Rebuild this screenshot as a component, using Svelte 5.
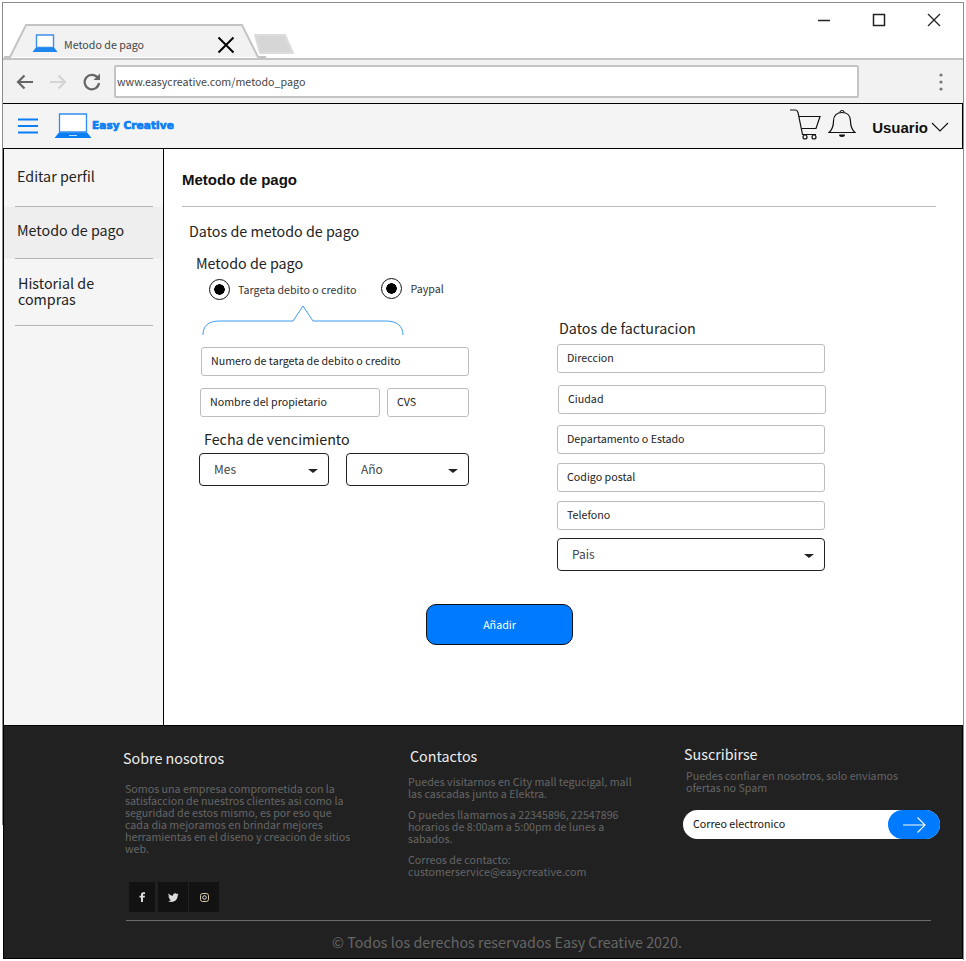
<script>
  let billing = ["Direccion", "Ciudad", "Departamento o Estado", "Codigo postal", "Telefono"];
</script>

<div class="window">
  <div class="tabstrip">
    <div class="tab">
      <svg class="tab-shape" width="262" height="36" viewBox="0 0 262 36">
        <path d="M0 34H6L22 2H238L254 34H262" fill="#f2f2f2" stroke="#c4c4c4" stroke-width="2" />
      </svg>
      <svg class="tab-logo" width="26" height="19" viewBox="0 0 26 19">
        <path d="M4.500 1H21.500V13.500H4.500Z" fill="#fff" stroke="#3b8fe8" stroke-width="1.400" />
        <path d="M3.500 14H22.500L25.500 18H0.500Z" fill="#1f86f0" />
      </svg>
      <span class="tab-title">Metodo de pago</span>
      <svg class="tab-close" width="18" height="18" viewBox="0 0 18 18">
        <path d="M1.500 1.500L16.500 16.500M16.500 1.500L1.500 16.500" stroke="#000" stroke-width="2" />
      </svg>
    </div>
    <svg class="new-tab" width="42" height="22" viewBox="0 0 42 22">
      <path d="M2 2H32L40 20H7Z" fill="#d6d6d6" stroke="#dcdcdc" stroke-width="2" stroke-linejoin="round" />
    </svg>
    <div class="win-controls">
      <svg width="14" height="14" viewBox="0 0 14 14"><path d="M1 7.500H13" stroke="#222" stroke-width="1.500" /></svg>
      <svg width="14" height="14" viewBox="0 0 14 14"><rect x="1.500" y="1.500" width="11" height="11" fill="none" stroke="#222" stroke-width="1.500" /></svg>
      <svg width="14" height="14" viewBox="0 0 14 14"><path d="M1 1L13 13M13 1L1 13" stroke="#222" stroke-width="1.300" /></svg>
    </div>
  </div>

  <div class="toolbar">
    <svg width="20" height="18" viewBox="0 0 20 18">
      <path d="M18 9H3M9.500 2.500L3 9L9.500 15.500" fill="none" stroke="#666" stroke-width="2.200" />
    </svg>
    <svg class="fwd" width="20" height="18" viewBox="0 0 20 18">
      <path d="M2 9H17M10.500 2.500L17 9L10.500 15.500" fill="none" stroke="#d4d4d4" stroke-width="2.200" />
    </svg>
    <svg class="reload" width="20" height="20" viewBox="0 0 20 20">
      <path d="M15.800 6A7.200 7.200 0 1 0 17 11" fill="none" stroke="#666" stroke-width="2.200" />
      <path d="M18 1.500V8H11.500Z" fill="#666" />
    </svg>
    <div class="address">www.easycreative.com/metodo_pago</div>
    <svg class="dots" width="6" height="18" viewBox="0 0 6 18">
      <circle cx="3" cy="2" r="1.600" fill="#777" /><circle cx="3" cy="9" r="1.600" fill="#777" /><circle cx="3" cy="16" r="1.600" fill="#777" />
    </svg>
  </div>

  <header class="appbar">
    <svg class="burger" width="20" height="16" viewBox="0 0 20 16">
      <path d="M0 1.500H20M0 8H20M0 14.500H20" stroke="#0a7ef5" stroke-width="2" />
    </svg>
    <svg class="logo" width="38" height="26" viewBox="0 0 38 26">
      <path d="M5.500 1H32.500V19H5.500Z" fill="#fff" stroke="#2f8cf0" stroke-width="1.300" />
      <path d="M5 19.500H33L37.500 25H0.500Z" fill="#0a7ef5" />
      <path d="M15 22H23V23H15Z" fill="#bcdcff" />
    </svg>
    <span class="brand">Easy Creative</span>
    <div class="appbar-right">
      <svg class="cart" width="32" height="32" viewBox="0 0 32 32">
        <path d="M1 2H6.500C8 2 8.600 3 9 4.500L13.500 26.500H27" fill="none" stroke="#111" stroke-width="1.200" />
        <path d="M9.800 8.500H31L27 20.500H12.300" fill="none" stroke="#111" stroke-width="1.200" />
        <circle cx="16" cy="29" r="2" fill="none" stroke="#111" stroke-width="1.200" />
        <circle cx="25" cy="29" r="2" fill="none" stroke="#111" stroke-width="1.200" />
      </svg>
      <svg class="bell" width="28" height="30" viewBox="0 0 28 30">
        <path d="M1 23.500C4 21 5.500 18 5.500 12C5.500 6.500 9 3.500 14 3.500C19 3.500 22.500 6.500 22.500 12C22.500 18 24 21 27 23.500Z" fill="none" stroke="#111" stroke-width="1.200" />
        <path d="M12 3.500A2 2 0 0 1 16 3.500" fill="none" stroke="#111" stroke-width="1.200" />
        <path d="M11 25.500H17A3 2.500 0 0 1 11 25.500Z" fill="#111" />
      </svg>
      <span class="user">Usuario</span>
      <svg class="chevron" width="18" height="10" viewBox="0 0 18 10"><path d="M1 1L9 9L17 1" fill="none" stroke="#111" stroke-width="1.100" /></svg>
    </div>
  </header>

  <div class="page">
    <aside class="sidebar">
      <div class="side-item first">Editar perfil</div>
      <div class="side-item active">Metodo de pago</div>
      <div class="side-item last">Historial de<br />compras</div>
    </aside>

    <main class="content">
      <h1>Metodo de pago</h1>
      <hr />
      <h2>Datos de metodo de pago</h2>
      <div class="columns">
        <section class="col-left">
          <h3>Metodo de pago</h3>
          <div class="radios">
            <label class="radio"><span class="dot"></span>Targeta debito o credito</label>
            <label class="radio second"><span class="dot"></span>Paypal</label>
          </div>
          <svg class="bracket" width="202" height="32" viewBox="0 0 202 32">
            <path d="M1 31C1 22 6 17 18 17H91L101 2L111 17H184C195 17 201 22 201 31" fill="none" stroke="#3f9bf5" stroke-width="1" />
          </svg>
          <div class="field wide">Numero de targeta de debito o credito</div>
          <div class="field-row">
            <div class="field owner">Nombre del propietario</div>
            <div class="field cvs">CVS</div>
          </div>
          <h3 class="exp">Fecha de vencimiento</h3>
          <div class="select-row">
            <div class="select month">Mes<span class="caret"></span></div>
            <div class="select year">Año<span class="caret"></span></div>
          </div>
        </section>

        <section class="col-right">
          <h3>Datos de facturacion</h3>
          <div class="billing">
            {#each billing as item, i}
              <div class="field b{i}">{item}</div>
            {/each}
          </div>
          <div class="select country">Pais<span class="caret"></span></div>
        </section>
      </div>
      <div class="actions"><button>Añadir</button></div>
    </main>
  </div>

  <footer>
    <div class="foot-cols">
      <div class="foot-about">
        <h4>Sobre nosotros</h4>
        <p>Somos una empresa comprometida con la<br />satisfaccion de nuestros clientes asi como la<br />seguridad de estos mismo, es por eso que<br />cada dia mejoramos en brindar mejores<br />herramientas en el diseno y creacion de sitios<br />web.</p>
        <div class="social">
          <span class="soc s1">
            <svg width="7" height="10" viewBox="0 0 7 10"><path d="M2 10V5.500H0.500V3.800H2V2.600C2 1 3 0.300 4.300 0.300H6V2H4.900C4.300 2 4 2.300 4 2.800V3.800H6L5.700 5.500H4V10Z" fill="#ddd" /></svg>
          </span>
          <span class="soc s2">
            <svg width="11" height="9" viewBox="0 0 11 9"><path d="M10.500 1.200C10.100 1.400 9.700 1.500 9.300 1.500C9.700 1.300 10.100 0.900 10.200 0.400C9.800 0.600 9.300 0.800 8.800 0.900C8 0 6.600 -0.100 5.700 0.700C5.100 1.300 4.900 2 5.100 2.800C3.400 2.700 1.800 1.900 0.700 0.500C0.100 1.500 0.400 2.800 1.400 3.500C1 3.500 0.700 3.400 0.400 3.200C0.400 4.300 1.100 5.200 2.200 5.400C1.900 5.500 1.500 5.500 1.200 5.400C1.500 6.300 2.300 6.900 3.300 7C2.300 7.800 1.100 8.100 0 8C1.100 8.700 2.300 9 3.500 9C7.500 9 9.800 5.600 9.700 2.400C10 2.100 10.300 1.700 10.500 1.200Z" fill="#ddd" /></svg>
          </span>
          <span class="soc s3">
            <svg width="9" height="9" viewBox="0 0 9 9"><rect x="0.500" y="0.500" width="8" height="8" rx="2.200" fill="none" stroke="#d9c9a8" /><circle cx="4.500" cy="4.500" r="1.800" fill="none" stroke="#ddd" /></svg>
          </span>
        </div>
      </div>
      <div class="foot-contact">
        <h4>Contactos</h4>
        <p>Puedes visitarnos en City mall tegucigal, mall<br />las cascadas junto a Elektra.</p>
        <p>O puedes llamarnos a 22345896, 22547896<br />horarios de 8:00am a 5:00pm de lunes a<br />sabados.</p>
        <p>Correos de contacto:<br />customerservice@easycreative.com</p>
      </div>
      <div class="foot-sub">
        <h4>Suscribirse</h4>
        <p>Puedes confiar en nosotros, solo enviamos<br />ofertas no Spam</p>
        <div class="subscribe">
          <span>Correo electronico</span>
          <div class="send">
            <svg width="24" height="18" viewBox="0 0 24 18"><path d="M1 9H22.500M15.500 1.500L23 9L15.500 16.500" fill="none" stroke="#fff" stroke-width="1.100" /></svg>
          </div>
        </div>
      </div>
    </div>
    <div class="copy">© Todos los derechos reservados Easy Creative 2020.</div>
  </footer>
</div>

<style>
  :global(body) {
    margin: 0;
    background: #fff;
  }
  .window {
    width: 962px;
    height: 958px;
    margin: 2px 0 0 2px;
    box-sizing: border-box;
    border-top: 1px solid #8a8a8a;
    border-right: 1px solid #8a8a8a;
    font-family: "Noto Sans CJK SC", "Noto Sans", sans-serif;
    color: #222;
    position: relative;
  }
  .window::before {
    content: "";
    position: absolute;
    left: 0;
    top: 0;
    width: 1px;
    height: 822px;
    background: #8a8a8a;
  }

  .tabstrip {
    height: 55px;
    display: flex;
    align-items: flex-end;
    padding-left: 2px;
    position: relative;
    box-sizing: border-box;
  }
  .tab {
    width: 240px;
    height: 34px;
    display: flex;
    align-items: center;
    position: relative;
    margin-bottom: -1px;
    padding: 3px 0 0 28px;
    box-sizing: border-box;
  }
  .tab-shape {
    position: absolute;
    left: 0;
    top: -2px;
  }
  .tab-logo,
  .tab-title,
  .tab-close {
    position: relative;
  }
  .tab-title {
    font-size: 10.700px;
    color: #444;
    margin: 2px 0 0 6px;
    width: 153px;
  }
  .tab-close {
    margin-top: 2px;
  }
  .new-tab {
    margin-left: 9px;
    margin-bottom: 3px;
    position: relative;
  }
  .win-controls {
    position: absolute;
    right: 22px;
    top: 10px;
    display: flex;
    gap: 41px;
  }

  .toolbar {
    height: 45px;
    background: #f2f2f2;
    border-top: 2px solid #c4c4c4;
    box-sizing: border-box;
    display: flex;
    align-items: center;
    padding-left: 13px;
  }
  .fwd {
    margin-left: 13px;
  }
  .reload {
    margin-left: 14px;
  }
  .address {
    width: 745px;
    height: 33px;
    margin-left: 12px;
    box-sizing: border-box;
    border: 2px solid #c4c4c4;
    border-radius: 2px;
    background: #fff;
    font-size: 10.700px;
    color: #444;
    line-height: 29px;
    padding-left: 1px;
  }
  .dots {
    margin-left: 79px;
  }

  .appbar {
    height: 46px;
    background: #f4f4f4;
    border: 1px solid #000;
    box-sizing: border-box;
    display: flex;
    align-items: center;
    padding-left: 15px;
  }
  .logo {
    margin-left: 16px;
    margin-top: -1px;
  }
  .brand {
    font-family: "DejaVu Sans", sans-serif;
    font-weight: 700;
    font-size: 10.500px;
    color: #0a7ef5;
    letter-spacing: 0.1px;
    -webkit-text-stroke: 0.7px #0a7ef5;
    margin-top: -3px;
  }
  .appbar-right {
    margin-left: auto;
    display: flex;
    align-items: center;
    padding-right: 13px;
  }
  .cart {
    margin-top: -4px;
  }
  .bell {
    margin-left: 7px;
    margin-top: -4px;
  }
  .user {
    font-family: "Liberation Sans", sans-serif;
    font-weight: 700;
    font-size: 15px;
    color: #111;
    margin: 2px 3px 0 16px;
  }
  .chevron {
    margin-top: 2px;
  }

  .page {
    display: flex;
    height: 576px;
  }
  .sidebar {
    width: 159px;
    margin-left: 1px;
    background: #f5f5f5;
    border-left: 1px solid #000;
    border-right: 1px solid #000;
    font-size: 14.300px;
    color: #222;
    flex: none;
  }
  .side-item {
    position: relative;
    padding-left: 13px;
    line-height: 16px;
    box-sizing: border-box;
  }
  .side-item::after {
    content: "";
    position: absolute;
    left: 11px;
    right: 10px;
    bottom: 0;
    height: 1px;
    background: #b5b5b5;
  }
  .first {
    padding-top: 19px;
    height: 58px;
  }
  .active {
    background: #eeeeee;
    padding-top: 15px;
    height: 52px;
  }
  .last {
    padding-top: 16px;
    padding-left: 14px;
    height: 67px;
  }

  .content {
    flex: 1;
    padding: 0 27px 0 18px;
    min-width: 0;
  }
  h1 {
    font-family: "Liberation Sans", sans-serif;
    font-size: 15px;
    font-weight: 700;
    color: #111;
    margin: 22px 0 0;
    line-height: 17px;
  }
  hr {
    border: 0;
    height: 1px;
    background: #bdbdbd;
    margin: 18px 0 0;
  }
  h2 {
    font-size: 14.300px;
    font-weight: 400;
    color: #222;
    margin: 15px 0 0 7px;
    line-height: 18px;
  }
  h3 {
    font-size: 14.300px;
    font-weight: 400;
    color: #222;
    margin: 0;
    line-height: 18px;
  }
  .columns {
    display: flex;
    padding-left: 17px;
  }
  .col-left {
    width: 270px;
    padding-top: 14px;
  }
  .col-left > h3 {
    margin-left: -3px;
  }
  .radios {
    display: flex;
    margin: 5px 0 0 10px;
    height: 25px;
    align-items: center;
  }
  .radio {
    display: flex;
    align-items: center;
    font-size: 10.700px;
    color: #333;
    gap: 8px;
  }
  .radio.second {
    margin-left: 25px;
    margin-top: -2px;
  }
  .dot {
    width: 21px;
    height: 21px;
    box-sizing: border-box;
    border: 1px solid #111;
    border-radius: 50%;
    background: radial-gradient(circle, #000 5px, #fff 5.500px);
  }
  .bracket {
    display: block;
    margin: 2px 0 0 3px;
  }
  .field {
    height: 29px;
    box-sizing: border-box;
    border: 1px solid #bdbdbd;
    border-radius: 3px;
    font-size: 10.700px;
    color: #222;
    line-height: 26px;
    padding-left: 9px;
    background: #fff;
  }
  .wide {
    margin: 11px 0 0 2px;
    padding-left: 9px;
  }
  .field-row {
    display: flex;
    gap: 7px;
    margin: 12px 0 0 1px;
  }
  .owner {
    width: 180px;
  }
  .cvs {
    width: 82px;
  }
  .col-left h3.exp {
    margin: 12px 0 0 5px;
    line-height: 20px;
  }
  .select-row {
    display: flex;
    gap: 17px;
    margin-top: 4px;
  }
  .select {
    height: 33px;
    box-sizing: border-box;
    border: 1px solid #222;
    border-radius: 4px;
    font-size: 12px;
    color: #444;
    line-height: 30px;
    padding-left: 14px;
    position: relative;
    background: #fff;
  }
  .month {
    width: 130px;
  }
  .year {
    width: 123px;
  }
  .caret {
    position: absolute;
    right: 10px;
    top: 15px;
    border-left: 5px solid transparent;
    border-right: 5px solid transparent;
    border-top: 4px solid #222;
  }
  .col-right {
    width: 268px;
    margin-left: 88px;
    padding-top: 79px;
  }
  .col-right > h3 {
    margin-left: 2px;
  }
  .billing {
    margin-top: 7px;
    display: flex;
    flex-direction: column;
  }
  .b1 {
    margin: 12px -1px 0 1px;
  }
  .b2 {
    margin-top: 11px;
  }
  .b3,
  .b4 {
    margin-top: 9px;
  }
  .country {
    margin-top: 8px;
  }
  .actions {
    padding-left: 244px;
    margin-top: 33px;
  }
  button {
    width: 147px;
    height: 41px;
    background: #007bff;
    border: 1px solid #111;
    border-radius: 10px;
    color: #fff;
    font-family: inherit;
    font-size: 10.700px;
    padding: 0;
    display: block;
  }

  footer {
    height: 234px;
    margin-left: 1px;
    background: #212121;
    border: 1px solid #000;
    box-sizing: border-box;
  }
  .foot-cols {
    display: flex;
    height: 195px;
    border-bottom: 1px solid #6a6a6a;
    margin: 0 31px 0 122px;
    box-sizing: border-box;
  }
  h4 {
    font-size: 14.300px;
    font-weight: 400;
    color: #eee;
    margin: 0;
    line-height: 20px;
  }
  footer p {
    font-size: 10.700px;
    line-height: 12px;
    color: #666;
    margin: 0;
  }
  .foot-about {
    width: 285px;
    flex: none;
    padding-top: 22px;
    margin-left: -3px;
  }
  .foot-about p {
    margin: 15px 0 0 2px;
  }
  .social {
    display: flex;
    gap: 3px;
    margin: 27px 0 0 6px;
  }
  .soc {
    height: 30px;
    background: #121212;
    display: flex;
    align-items: center;
    justify-content: center;
  }
  .s1 {
    width: 26px;
  }
  .s2,
  .s3 {
    width: 30px;
  }
  .s3 {
    margin-left: -2px;
  }
  .foot-contact {
    width: 276px;
    flex: none;
    padding-top: 20px;
  }
  .foot-contact h4 {
    margin-left: 2px;
  }
  .foot-contact p {
    margin-top: 9px;
  }
  .foot-contact h4 + p {
    margin-top: 10px;
  }
  .foot-sub {
    flex: none;
    padding-top: 18px;
  }
  .foot-sub p {
    margin: 6px 0 0 2px;
  }
  .subscribe {
    width: 257px;
    height: 29px;
    margin: 16px 0 0 -1px;
    background: #fff;
    border-radius: 15px;
    display: flex;
    align-items: center;
    justify-content: space-between;
    font-size: 10.700px;
    color: #111;
    padding-left: 10px;
    box-sizing: border-box;
  }
  .subscribe span {
    margin-top: -2px;
  }
  .send {
    width: 52px;
    height: 29px;
    background: #007bff;
    border-radius: 15px;
    display: flex;
    align-items: center;
    justify-content: center;
  }
  .copy {
    font-size: 14.300px;
    color: #666;
    text-align: center;
    margin-top: 12px;
    line-height: 18px;
    padding-left: 48px;
  }
</style>
